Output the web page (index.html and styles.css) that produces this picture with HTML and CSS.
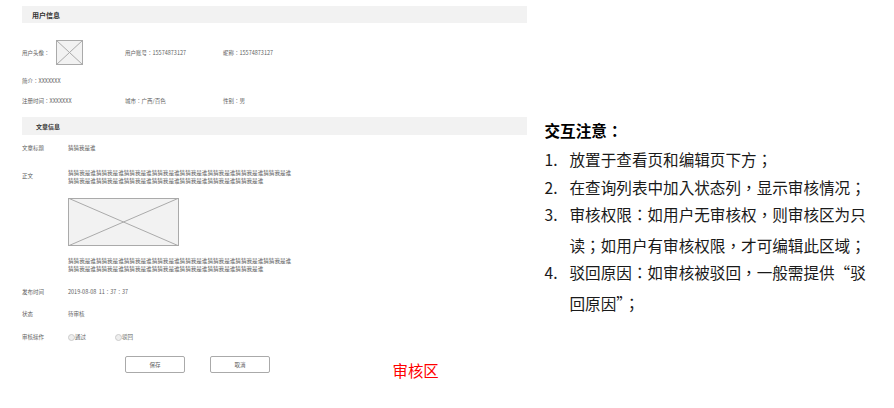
FILE: index.html
```html
<!DOCTYPE html>
<html lang="zh-TW">
<head>
    <meta charset="UTF-8">
    <title>审核区</title>
    <link rel="stylesheet" href="styles.css">
</head>
<body>
<div class="page">
    <div class="panel">
        <h3 class="bar">用户信息</h3>
        <div class="row row-avatar">
            <div class="cell cell-a">
                <span>用户头像：</span>
                <svg class="avatar" width="27" height="25" viewBox="0 0 27 25">
                    <rect x="0.5" y="0.5" width="26" height="24" fill="#f2f2f2" stroke="#aaa"/>
                    <path d="M0 0L27 25M27 0L0 25" stroke="#aaa" fill="none"/>
                </svg>
            </div>
            <div class="cell cell-b">用户账号：15574873127</div>
            <div class="cell">昵称：15574873127</div>
        </div>
        <div class="row row-intro">
            <div class="cell">简介：XXXXXXX</div>
        </div>
        <div class="row row-reg">
            <div class="cell cell-a">注册时间：XXXXXXX</div>
            <div class="cell cell-b">城市：广西/百色</div>
            <div class="cell">性别：男</div>
        </div>

        <h3 class="bar bar-second">文章信息</h3>
        <div class="field field-title">
            <div class="label">文章标题</div>
            <div>猜猜我是谁</div>
        </div>
        <div class="field field-body">
            <div class="label label-body">正文</div>
            <div class="body-text">
                <p>猜猜我是谁猜猜我是谁猜猜我是谁猜猜我是谁猜猜我是谁猜猜我是谁猜猜我是谁猜猜我是谁<br>猜猜我是谁猜猜我是谁猜猜我是谁猜猜我是谁猜猜我是谁猜猜我是谁猜猜我是谁</p>
                <svg class="picture" width="111" height="48" viewBox="0 0 111 48">
                    <rect x="0.5" y="0.5" width="110" height="47" fill="#f2f2f2" stroke="#aaa"/>
                    <path d="M0 0L111 48M111 0L0 48" stroke="#aaa" fill="none"/>
                </svg>
                <p>猜猜我是谁猜猜我是谁猜猜我是谁猜猜我是谁猜猜我是谁猜猜我是谁猜猜我是谁猜猜我是谁<br>猜猜我是谁猜猜我是谁猜猜我是谁猜猜我是谁猜猜我是谁猜猜我是谁猜猜我是谁</p>
            </div>
        </div>
        <div class="field field-date">
            <div class="label">发布时间</div>
            <div>2019-08-08&nbsp; 11：37：37</div>
        </div>
        <div class="field field-status">
            <div class="label">状态</div>
            <div>待审核</div>
        </div>
        <div class="field field-action">
            <div class="label">审核操作</div>
            <div class="radio radio-first"><i></i>通过</div>
            <div class="radio"><i></i>驳回</div>
        </div>
        <div class="actions">
            <button class="btn">保存</button>
            <button class="btn">取消</button>
            <span class="zone">审核区</span>
        </div>
    </div>

    <div class="notes">
        <h2>交互注意：</h2>
        <ol>
            <li>放置于查看页和编辑页下方；</li>
            <li>在查询列表中加入状态列，显示审核情况；</li>
            <li>审核权限：如用户无审核权，则审核区为只读；如用户有审核权限，才可编辑此区域；</li>
            <li>驳回原因：如审核被驳回，一般需提供“驳回原因”；</li>
        </ol>
    </div>
</div>
</body>
</html>
```

FILE: styles.css
```css
body {
    margin: 0;
    background-color: white;
    color: #5e5e5e;
    font-family: "Noto Sans CJK TC", "Liberation Sans", sans-serif;
    font-size: 5.5px;
}

.page {
    display: flex;
    min-height: 402px;
    padding: 6px 0 0 22px;
}

.panel {
    width: 505px;
    flex-shrink: 0;
}

.bar {
    margin: 0;
    height: 17px;
    line-height: 18px;
    padding-left: 10px;
    background-color: #f2f2f2;
    color: #333;
    font-size: 7px;
    font-weight: bold;
}

.bar-second {
    margin-top: 10px;
    height: 18px;
    line-height: 20px;
    padding-left: 14px;
    font-size: 6px;
}

.row {
    display: flex;
    align-items: center;
}

.row-avatar {
    margin-top: 17px;
    height: 25px;
}

.row-intro {
    margin-top: 10px;
    height: 12px;
}

.row-reg {
    margin-top: 8px;
    height: 12px;
}

.cell-a {
    display: flex;
    align-items: center;
    width: 103px;
}

.cell-b {
    width: 98px;
}

.avatar {
    margin-left: 6px;
}

.field {
    display: flex;
}

.label {
    width: 46px;
    flex-shrink: 0;
}

.field-title {
    margin-top: 9px;
    line-height: 9px;
}

.field-body {
    margin-top: 16px;
}

.label-body {
    margin-top: 3px;
}

.body-text {
    font-size: 5.58px;
}

.body-text p {
    margin: 0;
    line-height: 8px;
    white-space: nowrap;
}

.picture {
    display: block;
    margin: 13px 0 11px;
}

.field-date {
    margin-top: 15px;
    line-height: 9px;
}

.field-status {
    margin-top: 13px;
    line-height: 9px;
}

.field-action {
    margin-top: 14px;
    line-height: 9px;
}

.radio {
    display: flex;
    align-items: center;
}

.radio-first {
    width: 47px;
}

.radio i {
    width: 5px;
    height: 5px;
    border: 1px solid #ccc;
    border-radius: 50%;
    background-color: #eee;
}

.actions {
    display: flex;
    align-items: center;
    margin: 14px 0 0 103px;
    height: 17px;
}

.btn {
    width: 60px;
    height: 17px;
    margin-right: 25px;
    padding: 0;
    background-color: white;
    border: 1px solid #aaa;
    border-radius: 2px;
    color: #5e5e5e;
    font-family: inherit;
    font-size: 5.5px;
}

.zone {
    margin: 10px 0 0 97.5px;
    color: #ff0000;
    font-size: 15.4px;
    line-height: 20px;
}

.notes {
    margin: 112px 0 0 17.5px;
    color: #1a1a1a;
    font-size: 15.6px;
}

.notes h2 {
    margin: 0 0 1px;
    color: #000;
    font-size: 15.6px;
    line-height: 25px;
}

.notes ol {
    margin: 0;
    padding: 0;
    width: 322px;
    list-style: none;
    counter-reset: note;
}

.notes li {
    position: relative;
    padding-left: 25px;
    line-height: 30.5px;
    margin-bottom: -3px;
    counter-increment: note;
}

.notes li::before {
    content: counter(note) ".";
    position: absolute;
    left: 0;
}
```
